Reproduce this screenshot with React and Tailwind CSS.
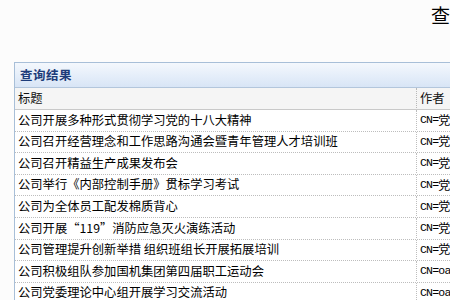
const rows = [
  ["公司开展多种形式贯彻学习党的十八大精神", "党"],
  ["公司召开经营理念和工作思路沟通会暨青年管理人才培训班", "党"],
  ["公司召开精益生产成果发布会", "党"],
  ["公司举行《内部控制手册》贯标学习考试", "党"],
  ["公司为全体员工配发棉质背心", "党"],
  ["公司开展“119”消防应急灭火演练活动", "党"],
  ["公司管理提升创新举措 组织班组长开展拓展培训", "党"],
  ["公司积极组队参加国机集团第四届职工运动会", "oa"],
  ["公司党委理论中心组开展学习交流活动", "oa"],
];

const cjk = { fontFamily: '"Noto Sans CJK SC", "Liberation Sans", sans-serif' };
const mono = { fontFamily: '"Liberation Mono", "Noto Sans CJK SC", monospace' };

export default function App() {
  return (
    <div className="w-[450px] h-[300px] overflow-hidden bg-[#fcfcfc]" style={cjk}>
      <div className="h-[62px] overflow-hidden whitespace-nowrap">
        <div className="pl-[431px] pt-[2px] text-[19px] leading-[26px] text-black">查询结果</div>
      </div>
      <div className="ml-[14px] w-[460px] border-l border-t border-[#a8bfd8]">
        <div className="h-[25px] flex items-center pl-[5px] bg-gradient-to-b from-[#f4f8fd] to-[#d8e5f6] border-b border-[#b3c6dc]">
          <span className="text-[12.5px] font-bold text-[#1d3c7a] tracking-[0.5px]">查询结果</span>
        </div>
        <div className="flex h-[22px] pb-[1px] bg-[#f5f5f5] border-b border-[#c9c9c9] text-[12.3px] text-[#111]">
          <div className="w-[401px] pl-[3px] flex items-center">标题</div>
          <div className="flex-1 pl-[3px] flex items-center border-l border-dotted border-[#b8b8b8]">作者</div>
        </div>
        {rows.map(([title, author], i) => (
          <div key={i} className="flex h-[21.6px] pb-[1px] bg-white border-b border-dotted border-[#bdbdbd] text-[12.3px] text-black">
            <div className="w-[401px] pl-[3px] flex items-center whitespace-nowrap">{title}</div>
            <div className="flex-1 pl-[3px] flex items-center border-l border-dotted border-[#bdbdbd] whitespace-nowrap">
              <span className="text-[11.5px] tracking-[-0.8px]" style={mono}>CN=</span>
              <span className={author === "oa" ? "text-[11.5px] tracking-[-0.8px]" : "text-[12px]"} style={author === "oa" ? mono : cjk}>
                {author}
              </span>
            </div>
          </div>
        ))}
      </div>
    </div>
  );
}
